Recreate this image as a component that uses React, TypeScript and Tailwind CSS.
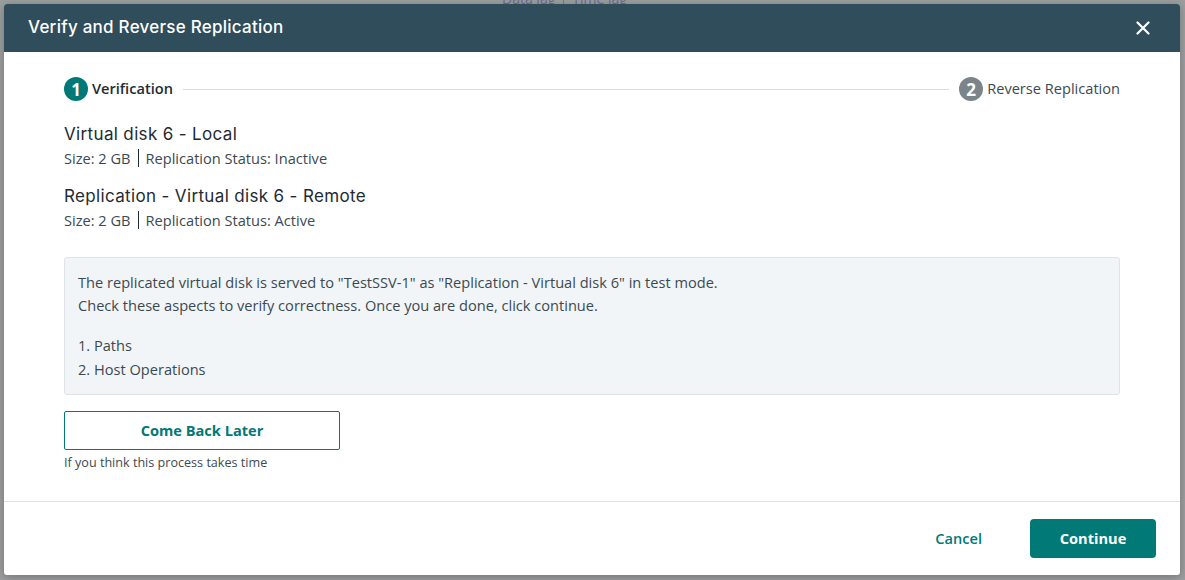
import React from 'react';

const teal = 'bg-[#007977]';

function StepCircle({ n, active }: { n: number; active: boolean }) {
  return (
    <span
      className={`flex h-6 w-6 items-center justify-center rounded-full text-[17px] font-bold leading-none text-white ${
        active ? teal : 'bg-[#7b8589]'
      }`}
    >
      {n}
    </span>
  );
}

function DiskInfo({ title, size, status }: { title: string; size: string; status: string }) {
  return (
    <div>
      <h3 className="font-['Inter',sans-serif] text-[17px] leading-[22px] tracking-[0.35px] text-[#1e2b33]">{title}</h3>
      <p className="mt-[3px] flex items-center text-[14.6px] leading-5 text-[#3b4a52]">
        <span>Size: {size}</span>
        <span className="mx-[7px] h-[18px] w-px bg-[#1e2b33]" />
        <span>Replication Status: {status}</span>
      </p>
    </div>
  );
}

export default function App() {
  return (
    <div className="relative h-[580px] w-full overflow-hidden bg-[#9b9d9e] pl-1 pt-1 font-['Open_Sans',sans-serif]">
      {/* dimmed page behind the dialog */}
      <div className="absolute left-[502px] top-[-9px] flex items-center gap-2 text-[14px] leading-4 text-[#4a4a8a] opacity-60">
        <span>Data lag</span>
        <span className="h-3 w-px bg-[#666]" />
        <span>Time lag</span>
      </div>
      <div className="relative flex h-[571px] w-[1176px] flex-col overflow-hidden rounded-[3px] bg-white shadow-[0_2px_8px_rgba(0,0,0,0.25)]">
        <header className="flex h-12 shrink-0 items-center justify-between bg-[#2f4d5a] pl-6 pr-[25px]">
          <h2 className="font-['Inter',sans-serif] text-[17px] font-medium tracking-[0.25px] text-white">
            Verify and Reverse Replication
          </h2>
          <button className="flex h-6 w-6 items-center justify-center text-white">
            <svg width="14" height="14" viewBox="0 0 14 14" fill="none">
              <path d="M1.5 1.5l11 11M12.5 1.5l-11 11" stroke="currentColor" strokeWidth="2.2" strokeLinecap="round" />
            </svg>
          </button>
        </header>

        <div className="flex-1 px-[60px] pt-[25px]">
          <div className="flex h-6 items-center">
            <StepCircle n={1} active />
            <span className="ml-[4px] text-[14.6px] font-semibold text-[#1e2b33]">Verification</span>
            <span className="mx-[10px] h-px flex-1 bg-[#dcdfe1]" />
            <StepCircle n={2} active={false} />
            <span className="ml-[4px] text-[14.6px] text-[#3b4a52]">Reverse Replication</span>
          </div>

          <div className="mt-[22px]">
            <DiskInfo title="Virtual disk 6 - Local" size="2 GB" status="Inactive" />
          </div>
          <div className="mt-[17px]">
            <DiskInfo title="Replication - Virtual disk 6 - Remote" size="2 GB" status="Active" />
          </div>

          <div className="mt-[27px] rounded-[3px] border border-[#dfe3e6] bg-[#f2f5f8] px-[13px] pb-[13px] pt-[12px] text-[14.6px] leading-6 text-[#3b4a52]">
            <p>The replicated virtual disk is served to "TestSSV-1" as "Replication - Virtual disk 6" in test mode.</p>
            <p className="-mt-px">Check these aspects to verify correctness. Once you are done, click continue.</p>
            <p className="mt-[16px]">1. Paths</p>
            <p>2. Host Operations</p>
          </div>

          <button className="mt-[16px] flex h-[39px] w-[276px] items-center justify-center rounded-[2px] border border-[#007977] text-[14.6px] font-bold text-[#007977]">
            Come Back Later
          </button>
          <p className="mt-[5px] text-[12.6px] leading-4 text-[#3b4a52]">If you think this process takes time</p>
        </div>

        <footer className="flex h-[74px] shrink-0 items-center justify-end gap-12 border-t border-[#dfe1e3] pr-6">
          <button className="text-[14.6px] font-semibold text-[#007977]">Cancel</button>
          <button className={`h-[39px] w-[126px] rounded-[4px] ${teal} text-[14.6px] font-bold text-white`}>Continue</button>
        </footer>
      </div>
    </div>
  );
}
